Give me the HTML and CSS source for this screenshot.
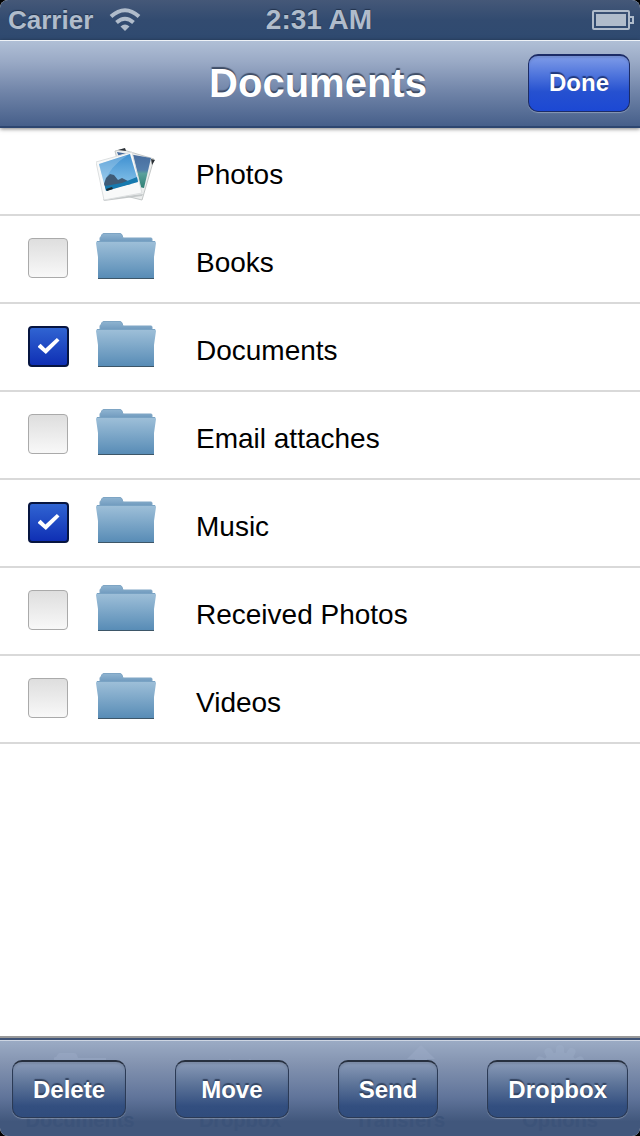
FILE: index.html
```
<!DOCTYPE html>
<html lang="en">
<head>
<meta charset="UTF-8" />
<meta name="viewport" content="width=device-width, initial-scale=1.0" />
<title>Documents</title>
<link rel="stylesheet" href="styles.css">
</head>
<body>

<!-- shared icons -->
<svg class="defs" width="0" height="0" aria-hidden="true">
  <defs>
    <linearGradient id="folderBack" x1="0" y1="0" x2="0" y2="1">
      <stop offset="0" stop-color="#8fb4d1"/>
      <stop offset="1" stop-color="#6b96bb"/>
    </linearGradient>
    <linearGradient id="folderFront" x1="0" y1="0" x2="0" y2="1">
      <stop offset="0" stop-color="#9fc0d9"/>
      <stop offset="1" stop-color="#588cb6"/>
    </linearGradient>
    <symbol id="folder" viewBox="0 0 60 48">
      <path d="M4 10V5Q4 4 5 4L6 1.500Q6.500 .5 8 .5H24Q25.500 .5 26 2L27 5H55Q56 5 56 6V10Z" fill="url(#folderBack)" stroke="#7ea5c4"/>
      <path d="M0 10Q0 8 2 8H58Q60 8 60 10L58 24V45H2V24Z" fill="url(#folderFront)"/>
      <path d="M1 8.500H59" stroke="#79a3c4" fill="none"/>
      <path d="M2 45.500H58" stroke="#3d5668" fill="none"/>
    </symbol>
  </defs>
</svg>

<div class="screen">
  <header>
    <div class="status-bar">
      <div class="carrier">
        <span>Carrier</span>
        <svg width="32" height="24" viewBox="0 0 32 24" fill="none" stroke="#b0bccb" stroke-width="4">
          <path d="M2 8.500Q16 -4 30 8.500"/>
          <path d="M7.500 14.500Q16 7 24.500 14.500"/>
          <path d="M16 23L11.500 18.500Q16 14.500 20.500 18.500Z" fill="#b0bccb" stroke="none"/>
        </svg>
      </div>
      <span class="clock">2:31 AM</span>
      <svg class="battery" width="42" height="20" viewBox="0 0 42 20">
        <rect x="1" y="1" width="36" height="18" rx="1" fill="none" stroke="#b0bccb" stroke-width="2"/>
        <rect x="4" y="4" width="30" height="12" fill="#b0bccb"/>
        <path d="M38 7H41V13H38" fill="none" stroke="#b0bccb" stroke-width="2"/>
      </svg>
    </div>
    <div class="nav-bar">
      <h1>Documents</h1>
      <button class="btn btn-done" type="button">Done</button>
    </div>
  </header>

  <main>
    <ul class="file-list">
      <li>
        <span class="no-check"></span>
        <svg class="icon photos" width="60" height="56" viewBox="0 0 60 56">
          <defs>
            <linearGradient id="sky" x1="0" y1="0" x2="0" y2="1">
              <stop offset="0" stop-color="#3d8fd0"/>
              <stop offset="1" stop-color="#93cbee"/>
            </linearGradient>
            <linearGradient id="backPhoto" x1="0" y1="0" x2="0" y2="1">
              <stop offset="0" stop-color="#466a9c"/>
              <stop offset=".5" stop-color="#537eac"/>
              <stop offset=".6" stop-color="#5aa09c"/>
              <stop offset="1" stop-color="#2f8074"/>
            </linearGradient>
          </defs>
          <path d="M19 4L28 2L31 4L58 12L46 53L30 49Z" fill="#eceeee" stroke="#c3c7c7"/>
          <path d="M22 3L29 1L30 4ZM55 12L59 13L56 18Z" fill="#2c3136"/>
          <path d="M21 5L55 11L48 41L34 38Z" fill="url(#backPhoto)"/>
          <path d="M7 52L47 47L46 49L8 54Z" fill="#c4c8c9"/>
          <path d="M0 15L36 5L46 46L8 53Z" fill="#f8f9f9" stroke="#dcdfe0"/>
          <path d="M3 17L34 7L42 34L10 44Z" fill="url(#sky)"/>
          <path d="M3 17L32 8Q14 19 8 36Z" fill="#fff" opacity=".2"/>
          <path d="M8 37L10 31L14 27L18 28L22 33L26 31L32 34L35 37L10 42Z" fill="#3f5b76"/>
          <path d="M9 39L26 36L41 30L42 35L10 44Z" fill="#1679ae"/>
          <path d="M10 42L16 40L17 42L11 44Z" fill="#1d2a30"/>
        </svg>
        <span class="name">Photos</span>
      </li>
      <li>
        <input type="checkbox" id="books">
        <svg class="icon" width="60" height="48"><use href="#folder"/></svg>
        <label class="name" for="books">Books</label>
      </li>
      <li>
        <input type="checkbox" id="documents" checked>
        <svg class="icon" width="60" height="48"><use href="#folder"/></svg>
        <label class="name" for="documents">Documents</label>
      </li>
      <li>
        <input type="checkbox" id="email">
        <svg class="icon" width="60" height="48"><use href="#folder"/></svg>
        <label class="name" for="email">Email attaches</label>
      </li>
      <li>
        <input type="checkbox" id="music" checked>
        <svg class="icon" width="60" height="48"><use href="#folder"/></svg>
        <label class="name" for="music">Music</label>
      </li>
      <li>
        <input type="checkbox" id="received">
        <svg class="icon" width="60" height="48"><use href="#folder"/></svg>
        <label class="name" for="received">Received Photos</label>
      </li>
      <li>
        <input type="checkbox" id="videos">
        <svg class="icon" width="60" height="48"><use href="#folder"/></svg>
        <label class="name" for="videos">Videos</label>
      </li>
    </ul>
  </main>

  <footer class="toolbar">
    <!-- tab bar showing through behind the edit buttons -->
    <div class="tabs" aria-hidden="true">
      <div class="tab">
        <svg width="60" height="60" viewBox="0 0 60 60"><path d="M4 18V14Q4 13 6 13L8 10Q9 9 10 9H24Q26 9 27 11L28 14H56V50H4Z"/></svg>
        <span>Documents</span>
      </div>
      <div class="tab">
        <svg width="60" height="60" viewBox="0 0 60 60"><path d="M20 15L30 22L20 29L10 22ZM40 15L50 22L40 29L30 22Z"/></svg>
        <span>Dropbox</span>
      </div>
      <div class="tab">
        <svg width="60" height="60" viewBox="0 0 60 60"><path d="M51 1L65 15H57V40H45V15H37Z"/></svg>
        <span>Transfers</span>
      </div>
      <div class="tab">
        <svg width="60" height="60" viewBox="0 0 60 60">
          <circle cx="30" cy="28" r="20"/>
          <path d="M30 5V51M7 28H53M18.500 8L41.500 48M41.500 8L18.500 48M10 16.500L50 39.500M50 16.500L10 39.500" stroke-width="8" stroke-linecap="round"/>
        </svg>
        <span>Options</span>
      </div>
    </div>
    <button class="btn btn-wide" type="button">Delete</button>
    <button class="btn btn-wide" type="button">Move</button>
    <button class="btn" type="button">Send</button>
    <button class="btn" type="button">Dropbox</button>
  </footer>
</div>

</body>
</html>
```

FILE: styles.css
```
:root {
  --status-text: #b0bccb;
  --line: #d9d9d9;
  --font-body: "Liberation Sans", Arial, sans-serif;
}

* { box-sizing: border-box; }

body {
  margin: 0;
  background: #000;
  font-family: var(--font-body);
  color: #000;
}

h1, ul { margin: 0; padding: 0; }

.defs { position: absolute; }

.screen {
  display: flex;
  flex-direction: column;
  min-height: 100vh;
  background: #fff;
  border-radius: 8px;
  overflow: hidden;
}

/* status bar */
.status-bar {
  display: grid;
  grid-template-columns: 1fr auto 1fr;
  align-items: center;
  height: 40px;
  padding: 0 6px 0 8px;
  background: linear-gradient(#455878, #324b70 50%, #2f4a70);
  color: var(--status-text);
  font-size: 26px;
  font-weight: bold;
  text-shadow: 0 -1px 1px #22334d;
}
.carrier { display: flex; align-items: center; gap: 16px; }
.clock { padding-right: 4px; font-size: 28px; }
.battery { justify-self: end; }

/* navigation bar */
.nav-bar {
  display: grid;
  grid-template-columns: 1fr auto 1fr;
  align-items: center;
  height: 88px;
  padding: 0 10px 2px;
  background: linear-gradient(#b0bfd6, #99a9c5 25%, #7084a8 60%, #465f8a);
  border-top: 1px solid #eef2f7;
  border-bottom: 2px solid #2d4670;
  box-shadow: 0 1px 4px rgba(0,0,0,0.5);
}
.nav-bar h1 {
  grid-column: 2;
  padding-right: 4px;
  font-size: 40px;
  line-height: 48px;
  color: #fff;
  text-shadow: 0 -2px 1px #3f4d66;
}

.btn {
  height: 58px;
  padding: 0 20px;
  border: 1px solid #2b3a55;
  border-top: 2px solid #27303f;
  border-radius: 10px;
  background: linear-gradient(#8a9bb8, #5d7499 40%, #334f80 80%, #304c7c);
  box-shadow: 0 1px 1px rgba(255,255,255,0.3), inset 0 2px 2px rgba(0,0,0,0.1);
  color: #fff;
  font-family: var(--font-body);
  font-size: 24px;
  font-weight: bold;
  text-shadow: 0 -2px 1px #33435f;
  cursor: pointer;
}
.btn-done {
  justify-self: end;
  border-color: #1c2c66;
  background: linear-gradient(#7f9ce8, #4e74dc 35%, #2651d0 65%, #1c48d4);
  text-shadow: 0 -2px 1px #20387c;
}
.btn-wide { min-width: 114px; }

/* folders */
main { flex: 1; }
.file-list { list-style: none; }
.file-list li {
  display: grid;
  grid-template-columns: 68px 60px 1fr;
  align-items: center;
  height: 88px;
  padding-left: 28px;
  border-bottom: 2px solid var(--line);
}
.name { padding: 8px 0 0 40px; font-size: 28px; line-height: 32px; }
.icon { margin-bottom: 4px; }
.photos { margin: 8px 0 0; }

input[type=checkbox] {
  appearance: none;
  width: 40px;
  height: 40px;
  margin: 0 0 2px;
  border: 1px solid #aaa;
  border-radius: 4px;
  background: linear-gradient(#dedede, #f8f8f8);
}
input[type=checkbox]:checked {
  width: 41px;
  height: 41px;
  border: 2px solid #071540;
  background: linear-gradient(#3064d2, #0f2fb4);
  display: grid;
  place-items: center;
}
input[type=checkbox]:checked::before {
  content: "";
  width: 22px;
  height: 16px;
  background: #fff;
  clip-path: polygon(0 54%, 14% 36%, 36% 66%, 88% 0, 100% 16%, 38% 100%);
}

/* bottom toolbar */
.toolbar {
  position: relative;
  display: flex;
  justify-content: space-between;
  align-items: center;
  height: 98px;
  padding: 2px 12px 0;
  background: linear-gradient(#9cacc5, #8393b0 25%, #60749a 60%, #41577c 85%, #41577c);
  border-top: 2px solid #3f5376;
  box-shadow: 0 -2px 0 #999, inset 0 1px 0 #cdd5e2;
}
.toolbar .btn { position: relative; }

.tabs {
  position: absolute;
  inset: 4px 0 0;
  display: grid;
  grid-template-columns: repeat(4, 1fr);
}
.tab {
  display: flex;
  flex-direction: column;
  align-items: center;
  color: #3c5379;
  font-size: 20px;
  font-weight: bold;
  line-height: 24px;
}
.tab svg {
  margin-bottom: 4px;
  overflow: visible;
  fill: #9fb0ca;
  stroke: #9fb0ca;
  stroke-width: 0;
  opacity: 0.4;
}
```
